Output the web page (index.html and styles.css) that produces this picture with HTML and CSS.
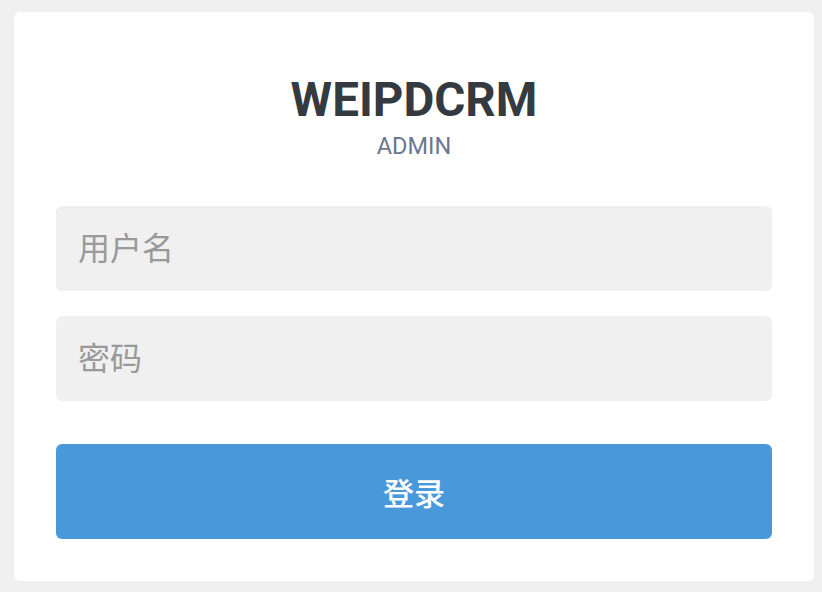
FILE: index.html
```html
<!DOCTYPE html>
<html lang="zh">
<head>
<meta charset="utf-8">
<title>WEIPDCRM Admin</title>
<link rel="stylesheet" href="styles.css">
</head>
<body>
<div class="card">
  <div class="brand">
    <h1 class="title">WEIPDCRM</h1>
    <div class="subtitle">ADMIN</div>
  </div>
  <form class="form">
    <input class="field" type="text" placeholder="用户名">
    <input class="field" type="password" placeholder="密码">
    <button class="submit" type="button">登录</button>
  </form>
</div>
</body>
</html>
```

FILE: styles.css
```css
html, body {
  margin: 0;
  padding: 0;
  background: #f0f0f0;
}
body {
  padding: 12px 8px 11px 14px;
  font-family: Roboto, "Noto Sans CJK SC", sans-serif;
}
.card {
  box-sizing: border-box;
  width: 800px;
  height: 569px;
  background: #fff;
  border-radius: 6px;
  padding: 72px 42px 0 42px;
}
.brand {
  text-align: center;
}
.title {
  margin: 0;
  font-size: 47.5px;
  line-height: 32px;
  font-weight: 700;
  color: #343a3f;
}
.subtitle {
  margin-top: 15px;
  font-size: 23.5px;
  line-height: 30px;
  color: #6a7890;
}
.form {
  margin-top: 45px;
  display: flex;
  flex-direction: column;
}
.field {
  box-sizing: border-box;
  height: 85px;
  border: none;
  outline: none;
  border-radius: 6px;
  background: #f0f0f0;
  padding: 0 22px;
  font-family: Roboto, "Noto Sans CJK SC", sans-serif;
  font-size: 32px;
  color: #333;
  margin-bottom: 25px;
}
.field::placeholder {
  color: #999;
}
.field + .field {
  margin-bottom: 43px;
}
.submit {
  height: 95px;
  border: none;
  border-radius: 6px;
  background: #4999da;
  color: #fff;
  font-family: Roboto, "Noto Sans CJK SC", sans-serif;
  font-size: 31px;
  font-weight: 500;
  cursor: pointer;
}
```
